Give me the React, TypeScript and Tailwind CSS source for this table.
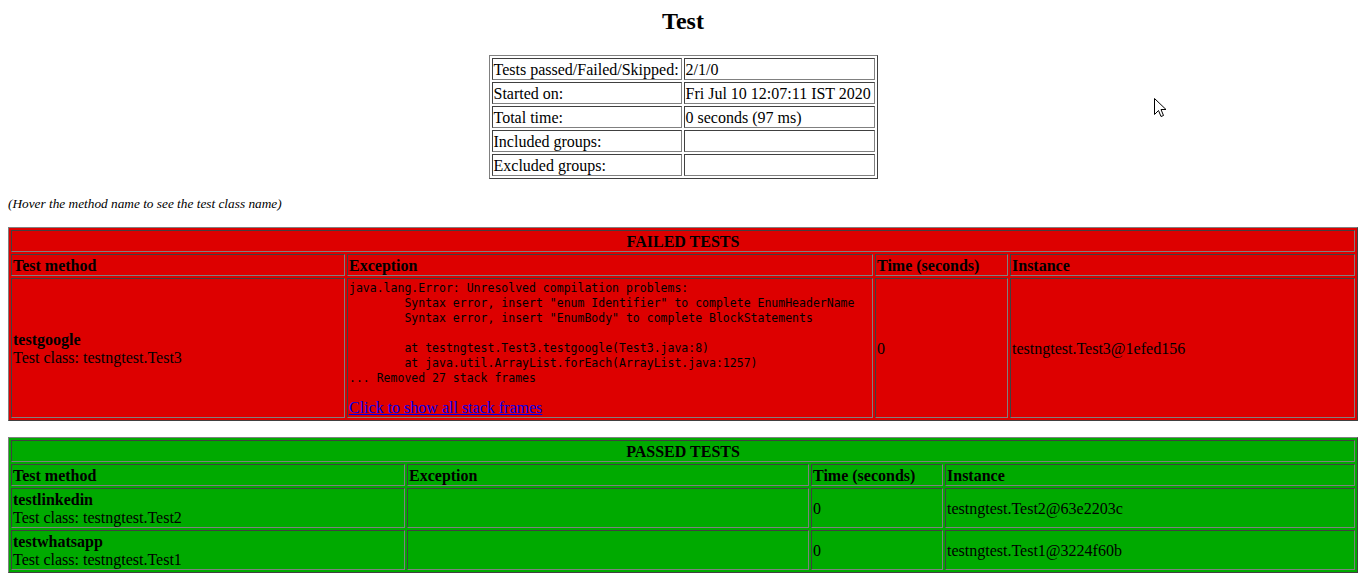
// TestNG 이메일 리포트 화면 재현
const tableBox =
  'border-separate border-spacing-[2px] border border-t-[#808080] border-l-[#808080] border-r-[#404040] border-b-[#404040]';
const cellBox =
  'border border-t-[#404040] border-l-[#404040] border-r-[#808080] border-b-[#808080] px-px pt-[2px] pb-0 text-left align-middle';

interface ResultRow {
  method: string;
  className: string;
  time: string;
  instance: string;
}

const passedRows: ResultRow[] = [
  { method: 'testlinkedin', className: 'testngtest.Test2', time: '0', instance: 'testngtest.Test2@63e2203c' },
  { method: 'testwhatsapp', className: 'testngtest.Test1', time: '0', instance: 'testngtest.Test1@3224f60b' },
];

const stackTrace = `java.lang.Error: Unresolved compilation problems: 
        Syntax error, insert "enum Identifier" to complete EnumHeaderName
        Syntax error, insert "EnumBody" to complete BlockStatements

        at testngtest.Test3.testgoogle(Test3.java:8)
        at java.util.ArrayList.forEach(ArrayList.java:1257)
... Removed 27 stack frames`;

function SummaryTable() {
  const rows: [string, string][] = [
    ['Tests passed/Failed/Skipped:', '2/1/0'],
    ['Started on:', 'Fri Jul 10 12:07:11 IST 2020'],
    ['Total time:', '0 seconds (97 ms)'],
    ['Included groups:', ''],
    ['Excluded groups:', ''],
  ];
  return (
    <table className={`${tableBox} mx-auto`}>
      <tbody>
        {rows.map(([label, value]) => (
          <tr key={label}>
            <td className={`${cellBox} w-[190px] h-[22px] whitespace-nowrap`}>{label}</td>
            <td className={`${cellBox} w-[191px] h-[22px] whitespace-nowrap`}>{value}</td>
          </tr>
        ))}
      </tbody>
    </table>
  );
}

function MethodCell({ method, className }: { method: string; className: string }) {
  return (
    <td className={cellBox}>
      <b>{method}</b>
      <br />
      Test class: {className}
    </td>
  );
}

export default function App() {
  return (
    <div className="relative min-h-[587px] w-full overflow-hidden bg-white font-['Liberation_Serif','Times_New_Roman',serif] text-[16px] leading-[18px] text-black">
      <div className="mx-2 w-[1350px]">
        {/* 제목 */}
        <div className="pt-[7px] text-center text-[24px] leading-[28px] font-bold">Test</div>

        {/* 요약 표 */}
        <div className="mt-[20px]">
          <SummaryTable />
        </div>

        <p className="mt-[17px] text-[13.3px] leading-[15px] italic">(Hover the method name to see the test class name)</p>

        {/* 실패한 테스트 */}
        <table className={`${tableBox} mt-[16px] w-[1350px] bg-[#dd0000]`}>
          <thead>
            <tr>
              <th colSpan={4} className={`${cellBox} h-[22px] !text-center font-bold`}>
                FAILED TESTS
              </th>
            </tr>
            <tr>
              <th className={`${cellBox} h-[22px] w-[334px] font-bold`}>Test method</th>
              <th className={`${cellBox} h-[22px] w-[526px] font-bold`}>Exception</th>
              <th className={`${cellBox} h-[22px] w-[133px] font-bold`}>Time (seconds)</th>
              <th className={`${cellBox} h-[22px] w-[345px] font-bold`}>Instance</th>
            </tr>
          </thead>
          <tbody>
            <tr>
              <MethodCell method="testgoogle" className="testngtest.Test3" />
              <td className={cellBox}>
                <pre className="m-0 overflow-hidden font-['DejaVu_Sans_Mono',monospace] text-[11.5px] leading-[15px] whitespace-pre">
                  {stackTrace}
                </pre>
                <div className="mt-[13px]">
                  <a href="#" className="text-[#0000ee] underline">
                    Click to show all stack frames
                  </a>
                </div>
              </td>
              <td className={cellBox}>0</td>
              <td className={cellBox}>testngtest.Test3@1efed156</td>
            </tr>
          </tbody>
        </table>

        {/* 통과한 테스트 */}
        <table className={`${tableBox} mt-[16px] w-[1350px] bg-[#00aa00]`}>
          <thead>
            <tr>
              <th colSpan={4} className={`${cellBox} h-[22px] !text-center font-bold`}>
                PASSED TESTS
              </th>
            </tr>
            <tr>
              <th className={`${cellBox} h-[22px] w-[394px] font-bold`}>Test method</th>
              <th className={`${cellBox} h-[22px] w-[402px] font-bold`}>Exception</th>
              <th className={`${cellBox} h-[22px] w-[132px] font-bold`}>Time (seconds)</th>
              <th className={`${cellBox} h-[22px] w-[410px] font-bold`}>Instance</th>
            </tr>
          </thead>
          <tbody>
            {passedRows.map((row) => (
              <tr key={row.method}>
                <MethodCell method={row.method} className={row.className} />
                <td className={cellBox}></td>
                <td className={cellBox}>{row.time}</td>
                <td className={cellBox}>{row.instance}</td>
              </tr>
            ))}
          </tbody>
        </table>
      </div>

      {/* 마우스 커서 */}
      <svg className="absolute top-[98px] left-[1154px]" width="13" height="20" viewBox="0 0 13 20">
        <path
          d="M0.5 0.5 L0.5 16.5 L4.5 12.5 L7 18.5 L9.5 17.5 L7 11.5 L12 11.5 Z"
          fill="white"
          stroke="black"
          strokeWidth="1"
          strokeLinejoin="round"
        />
      </svg>
    </div>
  );
}
